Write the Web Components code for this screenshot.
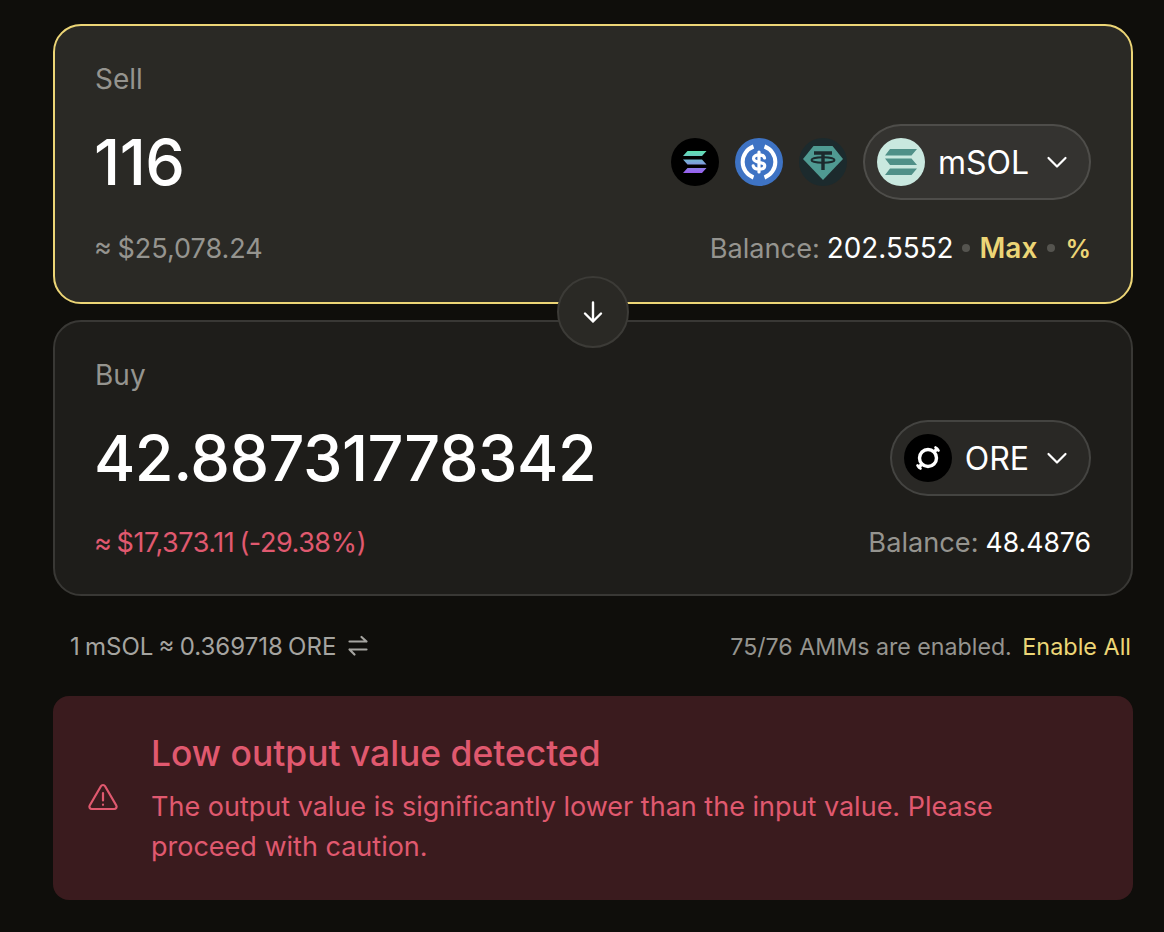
<!DOCTYPE html>
<html lang="en">
<head>
<meta charset="utf-8">
<title>Swap</title>
<style>
  html, body { margin: 0; background: #0f0e0b; }
  body { font-family: Inter, "Liberation Sans", sans-serif; color: #fff; }
</style>
</head>
<body>
<swap-form>
  <swap-panel slot="panels" label="Sell" value="116" active>
    <quick-tokens slot="tokens"></quick-tokens>
    <token-pill slot="tokens" symbol="mSOL"><token-icon slot="icon" name="msol" size="48"></token-icon></token-pill>
    <span slot="usd">≈ $25,078.24</span>
    <balance-line slot="balance" amount="202.5552" actions></balance-line>
  </swap-panel>
  <swap-arrow slot="panels"></swap-arrow>
  <swap-panel slot="panels" label="Buy" value="42.88731778342" warn>
    <token-pill slot="tokens" symbol="ORE"><token-icon slot="icon" name="ore" size="48"></token-icon></token-pill>
    <span slot="usd">≈ $17,373.11 (-29.38%)</span>
    <balance-line slot="balance" amount="48.4876"></balance-line>
  </swap-panel>
  <rate-row slot="rate"></rate-row>
  <alert-box slot="alert" heading="Low output value detected">The output value is significantly lower than the input value. Please proceed with caution.</alert-box>
</swap-form>

<script>
// token logos, all on a 48 box
const TOKEN_ICONS = {
  sol: `
    <defs><linearGradient id="solg" x1="0" y1="0" x2="0" y2="1">
      <stop offset="0" stop-color="#5fe3b0"/><stop offset=".5" stop-color="#7aa8d8"/><stop offset="1" stop-color="#9a5cf0"/>
    </linearGradient></defs>
    <circle cx="24" cy="24" r="24" fill="#000"/>
    <path fill="url(#solg)" d="M16.500 13h19l-4.500 5h-19zM12 21.500h19l4.500 5h-19zM16.500 30h19l-4.500 5h-19z"/>`,
  usdc: `
    <circle cx="24" cy="24" r="24" fill="#3e73c4"/>
    <path fill="none" stroke="#fff" stroke-width="4" d="M18.500 8.500a16.500 16.500 0 0 0 0 31M29.500 8.500a16.500 16.500 0 0 1 0 31"/>
    <path fill="none" stroke="#fff" stroke-width="3.200" stroke-linecap="round" d="M29.500 20c-.4-2-2.500-3.200-5.500-3.200-3 0-5.500 1.400-5.500 3.700 0 5.300 11.200 2.400 11.200 7.200 0 2.300-2.600 3.500-5.700 3.500-3 0-5.300-1.200-5.800-3.300M24 14v20"/>`,
  usdt: `
    <circle cx="24" cy="24" r="24" fill="#1c2a2d"/>
    <path fill="#4f9a92" d="M14.500 8h19L44 21 24 42 4 21z"/>
    <path fill="none" stroke="#1c2a2d" stroke-width="3.400" d="M15 15h18M24 15v17"/>
    <ellipse cx="24" cy="22" rx="11.500" ry="2.800" fill="none" stroke="#1c2a2d" stroke-width="2"/>`,
  msol: `
    <circle cx="24" cy="24" r="24" fill="#c9e8df"/>
    <path fill="#4f9088" d="M13 11h27l-5.500 6.500H8zM8 20.500h26.500l5.500 6.500H13zM13 30.500h27l-5.500 6.500H8z"/>`,
  ore: `
    <circle cx="24" cy="24" r="24" fill="#000"/>
    <circle cx="24" cy="24" r="8.500" fill="none" stroke="#fff" stroke-width="3.400"/>
    <path fill="none" stroke="#fff" stroke-width="3.200" stroke-linecap="round" d="M17.500 30.500l-2.500 2.500M30.500 17.500l2.500-2.500"/>
    <path fill="none" stroke="#fff" stroke-width="2.600" stroke-linecap="round" d="M13.500 31.500l3 3M31.500 13.500l3 3"/>`
};

class TokenIcon extends HTMLElement {
  connectedCallback() {
    const size = this.getAttribute('size') || 48;
    const name = this.getAttribute('name');
    this.attachShadow({ mode: 'open' }).innerHTML = `
      <style>
        :host { display: block; width: ${size}px; height: ${size}px; flex-shrink: 0; }
        svg { display: block; width: 100%; height: 100%; }
      </style>
      <svg viewBox="0 0 48 48" aria-hidden="true">${TOKEN_ICONS[name]}</svg>`;
  }
}

class QuickTokens extends HTMLElement {
  connectedCallback() {
    this.attachShadow({ mode: 'open' }).innerHTML = `
      <style>
        :host { display: flex; gap: 16px; align-items: center; }
      </style>
      <token-icon name="sol"></token-icon>
      <token-icon name="usdc"></token-icon>
      <token-icon name="usdt"></token-icon>`;
  }
}

class TokenPill extends HTMLElement {
  connectedCallback() {
    this.attachShadow({ mode: 'open' }).innerHTML = `
      <style>
        :host {
          display: flex;
          align-items: center;
          height: 76px;
          box-sizing: border-box;
          padding: 0 20px 0 12px;
          border-radius: 38px;
          border: 2px solid rgba(255, 255, 255, 0.13);
          background: rgba(255, 255, 255, 0.05);
          font-size: 32px;
          font-weight: 400;
          color: #fff;
        }
        span { margin-left: 13px; }
        svg { width: 24px; height: 24px; margin-left: 16px; display: block; }
      </style>
      <slot name="icon"></slot>
      <span>${this.getAttribute('symbol')}</span>
      <svg viewBox="0 0 24 24" fill="none" stroke="#fff" stroke-width="2.200" stroke-linecap="round" stroke-linejoin="round"><path d="M3.500 8l8.500 8.500L20.500 8"/></svg>`;
  }
}

class BalanceLine extends HTMLElement {
  connectedCallback() {
    const actions = this.hasAttribute('actions');
    const tail = actions ? `
      <i class="first"></i><b class="max">Max</b><i></i><b class="pct">%</b>` : '';
    this.attachShadow({ mode: 'open' }).innerHTML = `
      <style>
        :host { display: flex; align-items: center; font-size: 27.200px; color: #95948f; }
        .amt { color: #fff; margin-left: 7px; font-size: ${actions ? 27.8 : 26.6}px; }
        i { width: 8px; height: 8px; border-radius: 50%; background: #55544f; margin: 0 10px; }
        i.first { margin-left: 8px; }
        b { color: #ecd576; font-weight: 600; }
        .max { font-size: 28px; }
        .pct { font-size: 25.500px; }
      </style>
      <span>Balance:</span><span class="amt">${this.getAttribute('amount')}</span>${tail}`;
  }
}

class SwapPanel extends HTMLElement {
  connectedCallback() {
    const active = this.hasAttribute('active');
    const warn = this.hasAttribute('warn');
    this.attachShadow({ mode: 'open' }).innerHTML = `
      <style>
        :host {
          display: flex;
          flex-direction: column;
          box-sizing: border-box;
          height: ${active ? 280 : 276}px;
          padding: 37px 40px 0;
          border-radius: 28px;
          border: 2px solid ${active ? '#ecd576' : '#393835'};
          background: ${active ? '#2a2925' : '#1e1d1a'};
        }
        .label { font-size: 28px; line-height: 32px; color: #95948f; }
        .mid {
          display: flex;
          align-items: center;
          justify-content: space-between;
          margin-top: 27px;
          height: 80px;
        }
        .value { font-size: 63px; font-weight: 500; color: #fff; letter-spacing: -0.5px; margin-left: -1px; }
        .tokens { display: flex; align-items: center; gap: 16px; }
        .foot {
          display: flex;
          align-items: center;
          justify-content: space-between;
          margin-top: ${active ? 30 : 28}px;
          height: 32px;
          font-size: 27px;
          color: ${warn ? '#e0596f' : '#95948f'};
        }
        ::slotted(span) { word-spacing: -2px; margin-left: -1px; }
        ${warn ? '::slotted(span) { letter-spacing: -0.45px; }' : ''}
      </style>
      <div class="label">${this.getAttribute('label')}</div>
      <div class="mid">
        <div class="value">${this.getAttribute('value')}</div>
        <div class="tokens"><slot name="tokens"></slot></div>
      </div>
      <div class="foot"><slot name="usd"></slot><slot name="balance"></slot></div>`;
  }
}

class SwapArrow extends HTMLElement {
  connectedCallback() {
    this.attachShadow({ mode: 'open' }).innerHTML = `
      <style>
        :host {
          display: flex;
          align-items: center;
          justify-content: center;
          position: absolute;
          left: 504px;
          top: 252px;
          width: 72px;
          height: 72px;
          box-sizing: border-box;
          border-radius: 50%;
          border: 2px solid #3c3b37;
          background: #2a2925;
        }
        svg { width: 24px; height: 24px; display: block; }
      </style>
      <svg viewBox="0 0 24 24" fill="none" stroke="#fff" stroke-width="2.400" stroke-linecap="round" stroke-linejoin="round"><path d="M12 2.500v19M4 13.500l8 8 8-8"/></svg>`;
  }
}

class RateRow extends HTMLElement {
  connectedCallback() {
    this.attachShadow({ mode: 'open' }).innerHTML = `
      <style>
        :host {
          display: flex;
          align-items: center;
          justify-content: space-between;
          height: 30px;
          padding: 0 2px 0 17px;
          font-size: 23.200px;
          color: #a5a4a0;
        }
        .left { display: flex; align-items: center; gap: 10px; }
        .left span { font-size: 24px; word-spacing: -1.500px; }
        svg { width: 24px; height: 24px; display: block; }
        .right { color: #95948f; }
        .right b { font-weight: 400; font-size: 23.400px; color: #ecd576; margin-left: 4px; }
      </style>
      <div class="left"><span>1 mSOL ≈ 0.369718 ORE</span>
        <svg viewBox="0 0 24 24" fill="none" stroke="#a5a4a0" stroke-width="2.200" stroke-linecap="round" stroke-linejoin="round"><path d="M3.500 7.500h17M15.500 3L20.500 7.500M20.500 15.500h-17M8.500 20.500l-5-5"/></svg>
      </div>
      <div class="right">75/76 AMMs are enabled. <b>Enable All</b></div>`;
  }
}

class AlertBox extends HTMLElement {
  connectedCallback() {
    this.attachShadow({ mode: 'open' }).innerHTML = `
      <style>
        :host {
          display: flex;
          align-items: center;
          box-sizing: border-box;
          height: 204px;
          padding: 5px 120px 0 34px;
          border-radius: 16px;
          background: #3a1b1e;
          color: #e0596f;
        }
        svg { width: 32px; height: 32px; display: block; flex-shrink: 0; margin: 0 32px 0 0; position: relative; top: -4px; }
        h2 { margin: 0 0 13px; font-size: 35.400px; line-height: 40px; font-weight: 500; }
        p { margin: 0; font-size: 27px; line-height: 40px; }
      </style>
      <svg viewBox="0 0 32 32" fill="none" stroke="#e0596f" stroke-width="2.200" stroke-linecap="round" stroke-linejoin="round"><path d="M13.900 5.200L2.700 24.500c-.9 1.600.2 3.500 2.100 3.500h22.400c1.900 0 3-1.900 2.100-3.500L18.100 5.200c-.9-1.600-3.300-1.600-4.200 0zM16 12v7.500M16 23.500v.3"/></svg>
      <div><h2>${this.getAttribute('heading')}</h2><p><slot></slot></p></div>`;
  }
}

class SwapForm extends HTMLElement {
  connectedCallback() {
    this.attachShadow({ mode: 'open' }).innerHTML = `
      <style>
        :host { display: block; width: 1080px; margin: 24px 0 0 53px; }
        .panels { position: relative; display: flex; flex-direction: column; gap: 16px; }
        .rate { margin-top: 35px; }
        .alert { margin-top: 35px; }
      </style>
      <div class="panels"><slot name="panels"></slot></div>
      <div class="rate"><slot name="rate"></slot></div>
      <div class="alert"><slot name="alert"></slot></div>`;
  }
}

customElements.define('token-icon', TokenIcon);
customElements.define('quick-tokens', QuickTokens);
customElements.define('token-pill', TokenPill);
customElements.define('balance-line', BalanceLine);
customElements.define('swap-panel', SwapPanel);
customElements.define('swap-arrow', SwapArrow);
customElements.define('rate-row', RateRow);
customElements.define('alert-box', AlertBox);
customElements.define('swap-form', SwapForm);
</script>
</body>
</html>
